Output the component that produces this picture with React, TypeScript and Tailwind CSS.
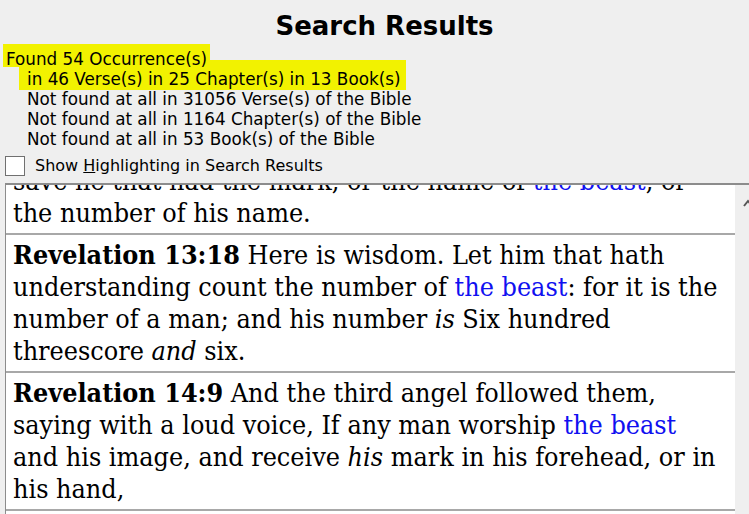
import React from "react";

const ui = { fontFamily: '"DejaVu Sans", Verdana, sans-serif' };
const serif = { fontFamily: '"DejaVu Serif Condensed", "DejaVu Serif", serif' };

function Beast() {
  return <span className="text-[#1010f0]">the beast</span>;
}

function Verse({ children }: { children: React.ReactNode }) {
  return (
    <div className="border-b-2 border-[#a8a8a8] pl-[7px] pr-2 py-[4px] whitespace-nowrap">
      {children}
    </div>
  );
}

export default function App() {
  return (
    <div className="w-[749px] h-[514px] bg-[#efefef] overflow-hidden flex flex-col text-black" style={ui}>
      <div className="h-[44px] shrink-0 pt-[4px] pl-[20px] text-center text-[26px] font-bold leading-[44px]">Search Results</div>
      <div className="text-[16.8px] leading-[20px] shrink-0 flex flex-col items-start">
        <div className="relative z-10 ml-[3px] bg-[#f2f200] px-[3px] pt-[5px] h-[23px] overflow-visible">Found 54 Occurrence(s)</div>
        <div className="-mt-[7px] ml-[19px] bg-[#f2f200] pl-[8px] pr-[6px] pt-[9px] h-[30px]">
          in 46 Verse(s) in 25 Chapter(s) in 13 Book(s)
        </div>
        <div className="-mt-[1px] pl-[27px]">Not found at all in 31056 Verse(s) of the Bible</div>
        <div className="pl-[27px]">Not found at all in 1164 Chapter(s) of the Bible</div>
        <div className="pl-[27px]">Not found at all in 53 Book(s) of the Bible</div>
      </div>
      <div className="flex items-center h-[34px] shrink-0 pl-[5px] gap-[10px] text-[16px]">
        <div className="w-[20px] h-[20px] border border-[#707070] bg-white" />
        <span>
          Show <span className="underline">H</span>ighlighting in Search Results
        </span>
      </div>
      <div className="flex-1 flex ml-[5px] border-t-2 border-l border-[#8c8c8c] overflow-hidden">
        <div className="flex-1 bg-white overflow-hidden text-[26.7px] leading-[32px]" style={serif}>
          <div className="-mt-[20px]">
            <div className="border-b-2 border-[#a8a8a8] pl-[7px] pr-2 pb-[4px] whitespace-nowrap">
              save he that had the mark, or the name of <Beast />, or
              <br />
              the number of his name.
            </div>
            <Verse>
              <b>Revelation 13:18</b> Here is wisdom. Let him that hath
              <br />
              understanding count the number of <Beast />: for it is the
              <br />
              number of a man; and his number <i>is</i> Six hundred
              <br />
              threescore <i>and</i> six.
            </Verse>
            <Verse>
              <b>Revelation 14:9</b> And the third angel followed them,
              <br />
              saying with a loud voice, If any man worship <Beast />
              <br />
              and his image, and receive <i>his</i> mark in his forehead, or in
              <br />
              his hand,
            </Verse>
            <Verse>
              <b>Revelation 14:11</b> And the smoke of their torment
            </Verse>
          </div>
        </div>
        <div className="w-[14px] bg-[#efefef] relative">
          <svg width="14" height="14" viewBox="0 0 14 14" className="absolute left-[8px] top-[13px]">
            <path d="M1 8 L5 3 L9 8" stroke="#555" strokeWidth="2" fill="none" />
          </svg>
        </div>
      </div>
    </div>
  );
}
